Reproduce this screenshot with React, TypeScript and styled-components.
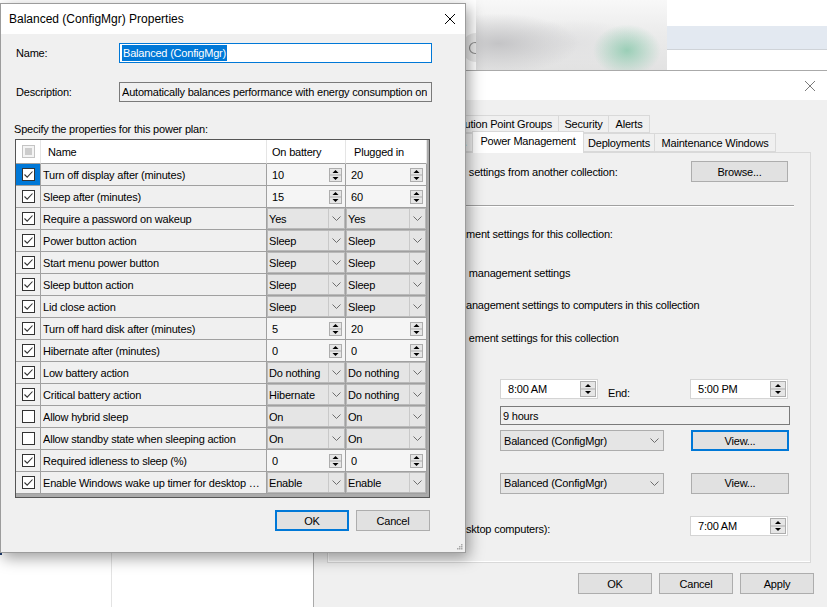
import React from "react";
import styled, { createGlobalStyle } from "styled-components";

const GlobalStyle = createGlobalStyle`
  html, body { margin: 0; padding: 0; background: #ffffff; overflow: hidden; }
  body { font-family: "Liberation Sans", Arial, sans-serif; font-size: 11px; letter-spacing: -0.2px; color: #000; }
  * { box-sizing: border-box; }
`;

const Desktop = styled.div`
  position: relative;
  width: 827px;
  height: 607px;
  overflow: hidden;
  background: #ffffff;
`;

/* ---------- background application ---------- */
const AppWindow = styled.div`
  position: absolute;
  inset: 0;
  display: flex;
  flex-direction: column;
  background: #ffffff;
`;
const AppHeader = styled.div`
  height: 70px;
  flex: none;
  display: flex;
`;
const HeaderHidden = styled.div`
  width: 462px;
  flex: none;
`;
const SearchPill = styled.div`
  width: 14px;
  height: 29px;
  margin-top: 33px;
  flex: none;
  background: #e9e9e9;
  border-radius: 15px 0 0 15px;
  display: flex;
  align-items: center;
  padding-left: 6px;
  overflow: hidden;
`;
const BlurBox = styled.div`
  width: 191px;
  flex: none;
  background:
    radial-gradient(ellipse 34px 26px at 79% 72%, rgba(150, 205, 180, 0.95), rgba(150, 205, 180, 0)),
    radial-gradient(ellipse 80px 30px at 12% 62%, rgba(196, 196, 198, 1), rgba(196, 196, 198, 0)),
    radial-gradient(ellipse 70px 24px at 50% 62%, rgba(225, 225, 226, 1), rgba(225, 225, 226, 0)),
    linear-gradient(180deg, #f8f8f8 0%, #ececec 45%, #e2e2e2 100%);
`;
const HeaderRight = styled.div`
  flex: 1;
  display: flex;
  flex-direction: column;
`;
const HeaderWhite = styled.div`
  height: 26px;
  background: #ffffff;
`;
const HeaderBand = styled.div`
  height: 24px;
  background: #e3e9f1;
  border-bottom: 1px solid #cfd3d8;
`;
const AppBody = styled.div`
  flex: 1;
  display: flex;
`;
const LeftPane = styled.div`
  width: 112px;
  flex: none;
  border-right: 1px solid #e3e3e3;
  display: flex;
  flex-direction: column;
`;
const AccentBar = styled.div`
  margin-top: 220px;
  width: 2px;
  height: 265px;
  background: #1d3c6e;
`;

/* ---------- shared win controls ---------- */
const Button = styled.div<{ $w: number; $focus?: boolean; $h?: number }>`
  width: ${(p) => p.$w}px;
  height: ${(p) => p.$h ?? 21}px;
  flex: none;
  background: #e1e1e1;
  border: ${(p) => (p.$focus ? "2px solid #0078d7" : "1px solid #adadad")};
  display: flex;
  align-items: center;
  justify-content: center;
  font-size: 11px;
  color: #000;
`;

const SpinSvg = ({ w = 13, h = 14 }: { w?: number; h?: number }) => {
  const mid = Math.round(h / 2);
  const cx = w / 2;
  return (
    <svg width={w} height={h} viewBox={`0 0 ${w} ${h}`} style={{ display: "block", flex: "none" }}>
      <rect x="0.5" y="0.5" width={w - 1} height={h - 1} fill="#e6e6e6" stroke="#adadad" />
      <line x1="1" y1={mid} x2={w - 1} y2={mid} stroke="#adadad" />
      <path d={`M${cx - 3} ${mid - 2} L${cx} ${mid - 5} L${cx + 3} ${mid - 2} Z`} fill="#000" />
      <path d={`M${cx - 3} ${mid + 2} L${cx + 3} ${mid + 2} L${cx} ${mid + 5} Z`} fill="#000" />
    </svg>
  );
};

const Chevron = () => (
  <svg width="9" height="5" viewBox="0 0 9 5" style={{ display: "block" }}>
    <path d="M0.5 0.5 L4.5 4.5 L8.5 0.5" fill="none" stroke="#6d6d6d" strokeWidth="1" />
  </svg>
);

const CloseX = ({ color = "#000" }: { color?: string }) => (
  <svg width="10" height="10" viewBox="0 0 10 10" style={{ display: "block" }}>
    <path d="M0 0 L10 10 M10 0 L0 10" stroke={color} strokeWidth="1" />
  </svg>
);

/* ---------- back window (collection properties) ---------- */
const BackWindow = styled.div`
  position: absolute;
  left: 313px;
  top: 70px;
  width: 521px;
  height: 560px;
  border: 1px solid #aaaaaa;
  background: #f0f0f0;
  display: flex;
  flex-direction: column;
`;
const BackTitle = styled.div`
  height: 29px;
  flex: none;
  background: #ffffff;
  display: flex;
  align-items: center;
  justify-content: flex-end;
  padding-right: 18px;
`;
const BackBody = styled.div`
  display: flex;
  flex-direction: column;
  padding: 15px 22px 0 13px;
`;
const TabRow = styled.div<{ $h: number }>`
  display: flex;
  height: ${(p) => p.$h}px;
  align-items: flex-end;
  position: relative;
`;
const HiddenTabs = styled.div<{ $w: number }>`
  width: ${(p) => p.$w}px;
  flex: none;
  display: flex;
  justify-content: flex-end;
  overflow: hidden;
  height: 100%;
`;
const Tab = styled.div<{ $w?: number; $active?: boolean }>`
  ${(p) => (p.$w ? `width: ${p.$w}px;` : "padding: 0 6px;")}
  flex: none;
  height: ${(p) => (p.$active ? "calc(100% + 3px)" : "100%")};
  margin-top: ${(p) => (p.$active ? "-2px" : "0")};
  margin-bottom: ${(p) => (p.$active ? "-1px" : "0")};
  margin-left: -1px;
  border: 1px solid #d9d9d9;
  border-bottom: ${(p) => (p.$active ? "none" : "1px solid #d9d9d9")};
  background: ${(p) => (p.$active ? "#ffffff" : "#f0f0f0")};
  position: relative;
  z-index: ${(p) => (p.$active ? 2 : 1)};
  display: flex;
  align-items: center;
  justify-content: center;
  white-space: nowrap;
  font-size: 11px;
  padding-bottom: ${(p) => (p.$active ? "3px" : "0")};
`;
const TabPanel = styled.div`
  height: 411px;
  border: 1px solid #d9d9d9;
  box-shadow: inset 1px -1px 0 #ffffff;
  display: flex;
  flex-direction: column;
  padding-left: 138px;
  position: relative;
  z-index: 1;
`;
const PRow = styled.div<{ $mt: number; $h: number }>`
  margin-top: ${(p) => p.$mt}px;
  height: ${(p) => p.$h}px;
  display: flex;
  align-items: center;
  white-space: nowrap;
`;
const PText = styled.span<{ $w?: number; $pt?: number }>`
  ${(p) => (p.$w ? `width: ${p.$w}px; flex: none;` : "")}
  padding-top: ${(p) => p.$pt ?? 0}px;
  white-space: nowrap;
`;
const Separator = styled.div<{ $mt: number }>`
  margin-top: ${(p) => p.$mt}px;
  width: 328px;
  height: 2px;
  border-top: 1px solid #a0a0a0;
  border-bottom: 1px solid #ffffff;
`;
const TimeSpin = styled.div<{ $ml?: number }>`
  width: 98px;
  height: 20px;
  flex: none;
  margin-left: ${(p) => p.$ml ?? 0}px;
  background: #ffffff;
  border: 1px solid #d4d4d4;
  display: flex;
  align-items: center;
  justify-content: space-between;
  padding: 0 1px 0 7px;
`;
const ReadBox = styled.div<{ $ml: number; $w: number }>`
  margin-left: ${(p) => p.$ml}px;
  width: ${(p) => p.$w}px;
  height: 19px;
  border: 1px solid #7a7a7a;
  background: #f0f0f0;
  display: flex;
  align-items: center;
  padding-left: 2px;
  white-space: nowrap;
  overflow: hidden;
`;
const Combo = styled.div<{ $ml: number; $w: number }>`
  margin-left: ${(p) => p.$ml}px;
  width: ${(p) => p.$w}px;
  height: 21px;
  flex: none;
  border: 1px solid #adadad;
  background: #e5e5e5;
  display: flex;
  align-items: center;
  justify-content: space-between;
  padding: 0 4px 0 3px;
`;
const Gap = styled.div<{ $w: number }>`
  width: ${(p) => p.$w}px;
  flex: none;
`;
const BottomButtons = styled.div`
  margin-top: 10px;
  margin-right: -3px;
  display: flex;
  justify-content: flex-end;
  gap: 7px;
`;

/* ---------- front dialog (power plan properties) ---------- */
const Dialog = styled.div`
  position: absolute;
  left: 0;
  top: 3px;
  width: 466px;
  height: 550px;
  border: 1px solid #9c9c9c;
  background: #f0f0f0;
  box-shadow: 3px 5px 14px rgba(0, 0, 0, 0.38);
  display: flex;
  flex-direction: column;
  z-index: 5;
`;
const TitleBar = styled.div`
  height: 30px;
  flex: none;
  background: #ffffff;
  display: flex;
  align-items: center;
  justify-content: space-between;
  padding: 0 10px 0 8px;
  font-size: 12px;
  letter-spacing: 0;
`;
const DialogBody = styled.div`
  flex: 1;
  display: flex;
  flex-direction: column;
  padding: 0 34px 0 14px;
  position: relative;
`;
const FieldRow = styled.div<{ $mt: number }>`
  margin-top: ${(p) => p.$mt}px;
  height: 20px;
  display: flex;
  align-items: center;
`;
const FieldLabel = styled.div`
  width: 104px;
  flex: none;
  padding-left: 1px;
`;
const TextInput = styled.div<{ $focus?: boolean }>`
  width: 313px;
  height: 20px;
  flex: none;
  border: 1px solid ${(p) => (p.$focus ? "#0078d7" : "#7a7a7a")};
  background: ${(p) => (p.$focus ? "#ffffff" : "#f0f0f0")};
  display: flex;
  align-items: center;
  padding-left: 2px;
  white-space: nowrap;
  overflow: hidden;
`;
const InputValue = styled.span`
  flex: 1;
  min-width: 0;
  margin-right: 4px;
  overflow: hidden;
  white-space: nowrap;
`;
const Selected = styled.span`
  background: #0078d7;
  color: #ffffff;
  line-height: 16px;
  padding: 0 1px;
`;
const SectionLabel = styled.div`
  margin-top: 20px;
  margin-left: -1px;
  height: 14px;
  line-height: 14px;
`;
const Grid = styled.div`
  margin-top: 3px;
  width: 415px;
  height: 359px;
  border: 1px solid #555555;
  background: #ababab;
  display: grid;
  grid-template-columns: 25px 226px 79px 81px;
  grid-template-rows: 24px;
  grid-auto-rows: 22px;
  align-content: start;
`;
const HeadCell = styled.div<{ $pl?: number }>`
  background: #ffffff;
  border-right: 1px solid #e5e5e5;
  border-bottom: 1px solid #a0a0a0;
  display: flex;
  align-items: center;
  justify-content: ${(p) => (p.$pl === undefined ? "center" : "flex-start")};
  padding-left: ${(p) => p.$pl ?? 0}px;
`;
const Cell = styled.div<{ $bg?: string; $pl?: number }>`
  background: ${(p) => p.$bg ?? "#f0f0f0"};
  border-right: 1px solid #a0a0a0;
  border-bottom: 1px solid #a0a0a0;
  display: flex;
  align-items: center;
  padding-left: ${(p) => p.$pl ?? 0}px;
  white-space: nowrap;
  overflow: hidden;
  min-width: 0;
`;
const CheckCell = styled(Cell)`
  justify-content: center;
  padding-left: 0;
`;
const CellText = styled.span`
  overflow: hidden;
  text-overflow: ellipsis;
  white-space: nowrap;
  flex: 1;
  min-width: 0;
`;
const NameText = styled(CellText)`
  margin-right: 6px;
`;
const SpinCell = styled(Cell)`
  background: #f5f5f5;
  padding: 0 3px 0 5px;
  justify-content: space-between;
`;
const ComboCell = styled(Cell)`
  background: #e5e5e5;
  padding: 0;
`;
const ComboInner = styled.div`
  flex: 1;
  height: 100%;
  border: 1px solid #b9b9b9;
  display: flex;
  align-items: center;
`;
const ComboValue = styled.span`
  flex: 1;
  padding-left: 1px;
`;
const DropPart = styled.div`
  width: 16px;
  height: 100%;
  flex: none;
  border-left: 1px solid #c9c9c9;
  display: flex;
  align-items: center;
  justify-content: center;
`;
const CheckBox = styled.div<{ $header?: boolean }>`
  width: 13px;
  height: 13px;
  flex: none;
  border: 1px solid ${(p) => (p.$header ? "#c4c4c4" : "#333333")};
  background: ${(p) => (p.$header ? "#f4f4f4" : "#ffffff")};
  display: flex;
  align-items: center;
  justify-content: center;
`;
const Indeterminate = styled.div`
  width: 7px;
  height: 7px;
  background: #cccccc;
`;
const DialogButtons = styled.div`
  margin-top: 12px;
  margin-right: 1px;
  display: flex;
  justify-content: flex-end;
  gap: 7px;
`;
const Grip = styled.div`
  position: absolute;
  right: 2px;
  bottom: 2px;
  width: 7px;
  height: 7px;
`;

type Val = { kind: "spin" | "combo"; text: string };
type Row = { name: string; on: boolean; bat: Val; plug: Val };

const sp = (text: string): Val => ({ kind: "spin", text });
const cb = (text: string): Val => ({ kind: "combo", text });

const rows: Row[] = [
  { name: "Turn off display after (minutes)", on: true, bat: sp("10"), plug: sp("20") },
  { name: "Sleep after (minutes)", on: true, bat: sp("15"), plug: sp("60") },
  { name: "Require a password on wakeup", on: true, bat: cb("Yes"), plug: cb("Yes") },
  { name: "Power button action", on: true, bat: cb("Sleep"), plug: cb("Sleep") },
  { name: "Start menu power button", on: true, bat: cb("Sleep"), plug: cb("Sleep") },
  { name: "Sleep button action", on: true, bat: cb("Sleep"), plug: cb("Sleep") },
  { name: "Lid close action", on: true, bat: cb("Sleep"), plug: cb("Sleep") },
  { name: "Turn off hard disk after (minutes)", on: true, bat: sp("5"), plug: sp("20") },
  { name: "Hibernate after (minutes)", on: true, bat: sp("0"), plug: sp("0") },
  { name: "Low battery action", on: true, bat: cb("Do nothing"), plug: cb("Do nothing") },
  { name: "Critical battery action", on: true, bat: cb("Hibernate"), plug: cb("Do nothing") },
  { name: "Allow hybrid sleep", on: false, bat: cb("On"), plug: cb("On") },
  { name: "Allow standby state when sleeping action", on: false, bat: cb("On"), plug: cb("On") },
  { name: "Required idleness to sleep (%)", on: true, bat: sp("0"), plug: sp("0") },
  { name: "Enable Windows wake up timer for desktop computers", on: true, bat: cb("Enable"), plug: cb("Enable") },
];

const Check = ({ on }: { on: boolean }) => (
  <CheckBox>
    {on && (
      <svg width="11" height="11" viewBox="0 0 11 11" style={{ display: "block" }}>
        <path d="M1.5 5.5 L4.2 8.2 L9.5 2.5" fill="none" stroke="#333333" strokeWidth="1.1" />
      </svg>
    )}
  </CheckBox>
);

const ValueCell = ({ v }: { v: Val }) =>
  v.kind === "spin" ? (
    <SpinCell>
      <CellText>{v.text}</CellText>
      <SpinSvg />
    </SpinCell>
  ) : (
    <ComboCell>
      <ComboInner>
        <ComboValue>{v.text}</ComboValue>
        <DropPart>
          <Chevron />
        </DropPart>
      </ComboInner>
    </ComboCell>
  );

const SearchGlyph = () => (
  <svg width="14" height="14" viewBox="0 0 14 14" style={{ display: "block", flex: "none" }}>
    <circle cx="7" cy="7" r="5.5" fill="none" stroke="#8f8f8f" strokeWidth="1.2" />
  </svg>
);

const GripDots = () => (
  <svg width="7" height="7" viewBox="0 0 7 7" style={{ display: "block" }}>
    {[
      [5, 1],
      [3, 3],
      [5, 3],
      [1, 5],
      [3, 5],
      [5, 5],
    ].map(([x, y]) => (
      <rect key={`${x}-${y}`} x={x} y={y} width="1.5" height="1.5" fill="#a8a8a8" />
    ))}
  </svg>
);

export default function App() {
  return (
    <>
      <GlobalStyle />
      <Desktop>
        <AppWindow>
          <AppHeader>
            <HeaderHidden />
            <SearchPill>
              <SearchGlyph />
            </SearchPill>
            <BlurBox />
            <HeaderRight>
              <HeaderWhite />
              <HeaderBand />
            </HeaderRight>
          </AppHeader>
          <AppBody>
            <LeftPane>
              <AccentBar />
            </LeftPane>
          </AppBody>
        </AppWindow>

        <BackWindow>
          <BackTitle>
            <CloseX color="#7a7a7a" />
          </BackTitle>
          <BackBody>
            <TabRow $h={18}>
              <HiddenTabs $w={232}>
                <Tab>Collection Variables</Tab>
                <Tab>Distribution Point Groups</Tab>
              </HiddenTabs>
              <Tab $w={51}>Security</Tab>
              <Tab $w={42}>Alerts</Tab>
            </TabRow>
            <TabRow $h={19}>
              <HiddenTabs $w={146}>
                <Tab>General</Tab>
                <Tab>Membership Rules</Tab>
              </HiddenTabs>
              <Tab $w={112} $active>
                Power Management
              </Tab>
              <Tab $w={72}>Deployments</Tab>
              <Tab $w={122}>Maintenance Windows</Tab>
            </TabRow>
            <TabPanel>
              <PRow $mt={8} $h={21}>
                <PText $w={225}>&nbsp;settings from another collection:</PText>
                <Button $w={97}>Browse...</Button>
              </PRow>
              <Separator $mt={23} />
              <PRow $mt={20} $h={14}>
                <PText>ment settings for this collection:</PText>
              </PRow>
              <PRow $mt={25} $h={14}>
                <PText>&nbsp;management settings</PText>
              </PRow>
              <PRow $mt={18} $h={14}>
                <PText>anagement settings to computers in this collection</PText>
              </PRow>
              <PRow $mt={19} $h={14}>
                <PText>&nbsp;ement settings for this collection</PText>
              </PRow>
              <PRow $mt={34} $h={20}>
                <TimeSpin $ml={34}>
                  <span>8:00 AM</span>
                  <SpinSvg w={16} h={16} />
                </TimeSpin>
                <Gap $w={10} />
                <PText $w={82} $pt={7}>
                  End:
                </PText>
                <TimeSpin>
                  <span>5:00 PM</span>
                  <SpinSvg w={16} h={16} />
                </TimeSpin>
              </PRow>
              <PRow $mt={7} $h={19}>
                <ReadBox $ml={34} $w={290}>
                  9 hours
                </ReadBox>
              </PRow>
              <PRow $mt={5} $h={21}>
                <Combo $ml={34} $w={164}>
                  <span>Balanced (ConfigMgr)</span>
                  <Chevron />
                </Combo>
                <Gap $w={27} />
                <Button $w={98} $focus>
                  View...
                </Button>
              </PRow>
              <PRow $mt={21} $h={22}>
                <Combo $ml={34} $w={164}>
                  <span>Balanced (ConfigMgr)</span>
                  <Chevron />
                </Combo>
                <Gap $w={27} />
                <Button $w={98}>View...</Button>
              </PRow>
              <PRow $mt={22} $h={20}>
                <PText $w={224} $pt={6}>
                  sktop computers):
                </PText>
                <TimeSpin>
                  <span>7:00 AM</span>
                  <SpinSvg w={16} h={16} />
                </TimeSpin>
              </PRow>
            </TabPanel>
            <BottomButtons>
              <Button $w={74} $h={21}>
                OK
              </Button>
              <Button $w={74} $h={21}>
                Cancel
              </Button>
              <Button $w={74} $h={21}>
                Apply
              </Button>
            </BottomButtons>
          </BackBody>
        </BackWindow>

        <Dialog>
          <TitleBar>
            <span>Balanced (ConfigMgr) Properties</span>
            <CloseX />
          </TitleBar>
          <DialogBody>
            <FieldRow $mt={9}>
              <FieldLabel>Name:</FieldLabel>
              <TextInput $focus>
                <Selected>Balanced (ConfigMgr)</Selected>
              </TextInput>
            </FieldRow>
            <FieldRow $mt={19}>
              <FieldLabel>Description:</FieldLabel>
              <TextInput>
                <InputValue>Automatically balances performance with energy consumption on capable hardware.</InputValue>
              </TextInput>
            </FieldRow>
            <SectionLabel>Specify the properties for this power plan:</SectionLabel>
            <Grid>
              <HeadCell>
                <CheckBox $header>
                  <Indeterminate />
                </CheckBox>
              </HeadCell>
              <HeadCell $pl={7}>Name</HeadCell>
              <HeadCell $pl={5}>On battery</HeadCell>
              <HeadCell $pl={8}>Plugged in</HeadCell>
              {rows.map((r, i) => (
                <React.Fragment key={r.name}>
                  <CheckCell $bg={i === 0 ? "#0078d7" : undefined}>
                    <Check on={r.on} />
                  </CheckCell>
                  <Cell $pl={2}>
                    <NameText>{r.name}</NameText>
                  </Cell>
                  <ValueCell v={r.bat} />
                  <ValueCell v={r.plug} />
                </React.Fragment>
              ))}
            </Grid>
            <DialogButtons>
              <Button $w={74} $h={21} $focus>
                OK
              </Button>
              <Button $w={74} $h={21}>
                Cancel
              </Button>
            </DialogButtons>
            <Grip>
              <GripDots />
            </Grip>
          </DialogBody>
        </Dialog>
      </Desktop>
    </>
  );
}
